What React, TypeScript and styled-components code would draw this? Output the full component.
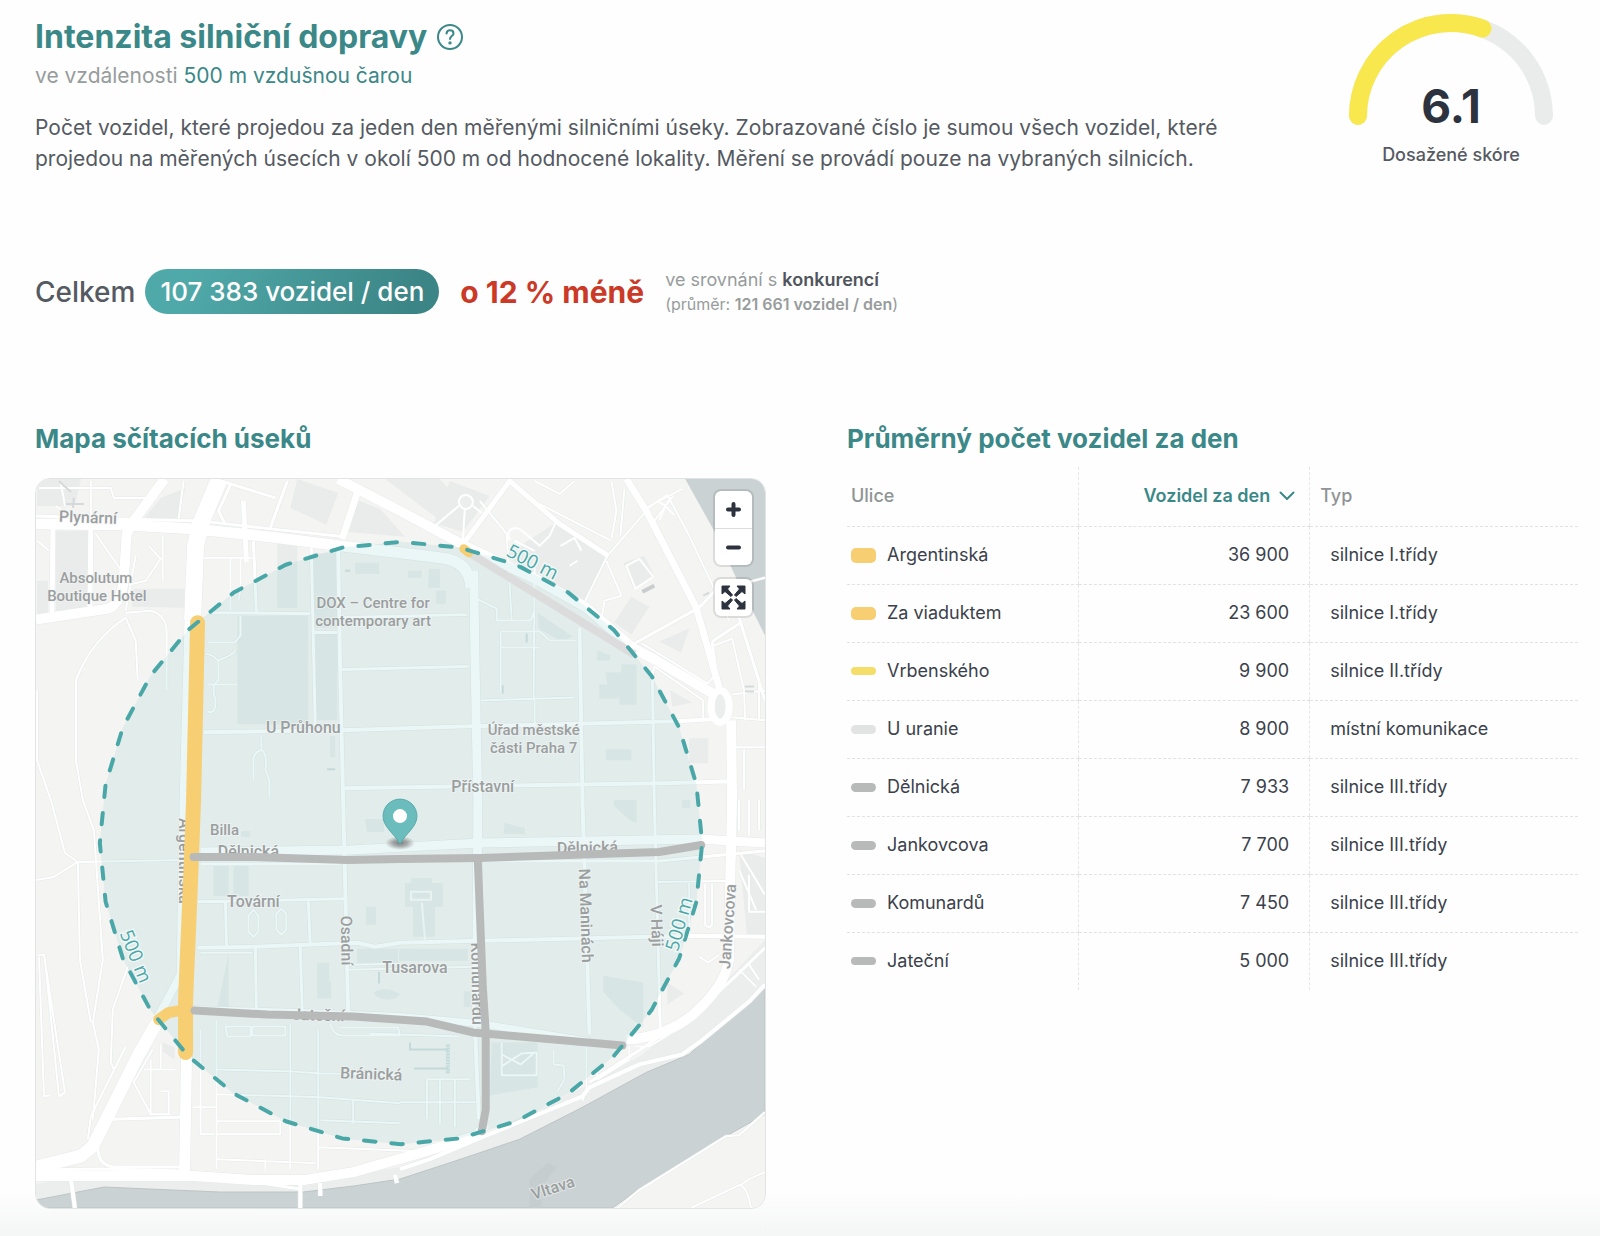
import React from "react";
import styled, { createGlobalStyle } from "styled-components";

const teal = "#3b8888";

const GlobalStyle = createGlobalStyle`
  *, *::before, *::after { box-sizing: border-box; }
  body { margin: 0; background: #fff; }
  button { font: inherit; color: inherit; background: none; border: 0; padding: 0; cursor: pointer; }
  h1, h2, p { margin: 0; }
`;

const Page = styled.main`
  min-height: 100vh;
  padding: 14px 22px 24px 35px;
  font-family: Inter, "Liberation Sans", sans-serif;
  color: #555a62;
  background: linear-gradient(to top, #f4f6f5, #fefefe 44px);
`;

const Header = styled.header`
  display: flex;
  justify-content: space-between;
  gap: 40px;
`;

const Intro = styled.div`
  flex: 1;
  max-width: 1220px;
`;

const TitleRow = styled.div`
  display: flex;
  align-items: center;
  gap: 10px;
  height: 46px;
`;

const Title = styled.h1`
  font-size: 32px;
  line-height: 46px;
  font-weight: 700;
  color: ${teal};
`;

const HelpButton = styled.button`
  display: flex;
  width: 26px;
  height: 26px;
  color: ${teal};
`;

const Subtitle = styled.p`
  font-size: 21px;
  line-height: 31px;
  color: #979c9c;
`;

const Accent = styled.span`
  color: ${teal};
`;

const Description = styled.p`
  margin-top: 21px;
  font-size: 21px;
  line-height: 31px;
`;

const Score = styled.div`
  display: flex;
  flex-direction: column;
  align-items: center;
  width: 254px;
`;

const Gauge = styled.div`
  position: relative;
  width: 204px;
  height: 112px;
`;

const GaugeValue = styled.strong`
  position: absolute;
  inset: auto 0 0;
  text-align: center;
  font-size: 46px;
  line-height: 40px;
  font-weight: 700;
  color: #2c323e;
`;

const ScoreLabel = styled.p`
  margin-top: 16px;
  font-size: 18px;
  line-height: 26px;
  font-weight: 500;
`;

const Summary = styled.section`
  display: flex;
  align-items: center;
  margin-top: 95px;
  height: 45px;
`;

const Total = styled.p`
  font-size: 28px;
  font-weight: 500;
`;

const Pill = styled.span`
  margin-left: 10px;
  padding: 0 15px;
  border-radius: 23px;
  font-size: 26px;
  line-height: 45px;
  font-weight: 500;
  color: #fff;
  background: linear-gradient(110deg, #50a9a9 15%, #3c8586 90%);
`;

const Difference = styled.strong`
  margin-left: 21px;
  font-size: 30px;
  color: #cb3927;
`;

const Comparison = styled.div`
  margin-left: 21px;
  font-size: 18px;
  line-height: 24px;
  color: #979c9c;
`;

const Dark = styled.strong`
  font-weight: 600;
  color: #50555d;
`;

const Small = styled.div`
  font-size: 16px;
  strong { font-weight: 600; }
`;

const Columns = styled.div`
  display: grid;
  grid-template-columns: minmax(0, 1fr) minmax(0, 1fr);
  gap: 81px;
  margin-top: 107px;
`;

const SectionTitle = styled.h2`
  font-size: 26px;
  line-height: 36px;
  font-weight: 700;
  color: ${teal};
`;

const MapFrame = styled.div`
  position: relative;
  margin-top: 21px;
  aspect-ratio: 1;
  overflow: hidden;
  border: 1px solid #e1e4e4;
  border-radius: 15px;
`;

const MapDrawing = styled.svg`
  display: block;
  width: 100%;
  height: 100%;
`;

const Controls = styled.div`
  position: absolute;
  top: 12px;
  right: 13px;
  display: grid;
  gap: 14px;
`;

const ControlGroup = styled.div`
  display: grid;
  border-radius: 6px;
  background: #fff;
  box-shadow: 0 0 0 2px rgba(0, 0, 0, 0.1);
`;

const ControlButton = styled.button`
  display: grid;
  place-items: center;
  width: 37px;
  height: 37px;
  color: #2c323e;
  & + & { border-top: 1px solid #ddd; }
`;

const Table = styled.table`
  width: 100%;
  margin-top: 10px;
  border-collapse: collapse;
  table-layout: fixed;
  font-size: 18px;
  line-height: 26px;
  color: #3b414b;
`;

const HeadCell = styled.th<{ $width: string; $right?: boolean; $inset?: number }>`
  width: ${(p) => p.$width};
  height: 59px;
  padding: 0 14px 0 ${(p) => p.$inset ?? 4}px;
  text-align: ${(p) => (p.$right ? "right" : "left")};
  font-weight: 500;
  color: #8f9495;
  border-bottom: 1px dashed #e2e2e2;
  & + & { border-left: 1px dashed #e6e6e6; }
`;

const SortButton = styled.button`
  display: inline-flex;
  align-items: center;
  gap: 9px;
  color: ${teal};
  font-weight: 600;
`;

const Row = styled.tr`
  &:not(:last-child) td { border-bottom: 1px dashed #e2e2e2; }
`;

const Cell = styled.td<{ $right?: boolean }>`
  height: 58px;
  padding: 0 20px 0 ${(p) => (p.$right ? 4 : 20)}px;
  text-align: ${(p) => (p.$right ? "right" : "left")};
  &:first-child { padding-left: 4px; }
  & + & { border-left: 1px dashed #e6e6e6; }
`;

const Street = styled.div`
  display: flex;
  align-items: center;
  gap: 11px;
`;

const Swatch = styled.span<{ $color: string; $height: number }>`
  width: 25px;
  height: ${(p) => p.$height}px;
  border-radius: 5px;
  background: ${(p) => p.$color};
`;

const rows = [
  { name: "Argentinská", count: "36 900", type: "silnice I.třídy", color: "#f7ce72", size: 15 },
  { name: "Za viaduktem", count: "23 600", type: "silnice I.třídy", color: "#f7ce72", size: 13 },
  { name: "Vrbenského", count: "9 900", type: "silnice II.třídy", color: "#f5de68", size: 8 },
  { name: "U uranie", count: "8 900", type: "místní komunikace", color: "#e2e3e3", size: 9 },
  { name: "Dělnická", count: "7 933", type: "silnice III.třídy", color: "#b8baba", size: 9 },
  { name: "Jankovcova", count: "7 700", type: "silnice III.třídy", color: "#b8baba", size: 9 },
  { name: "Komunardů", count: "7 450", type: "silnice III.třídy", color: "#b8baba", size: 9 },
  { name: "Jateční", count: "5 000", type: "silnice III.třídy", color: "#b8baba", size: 8 },
];

// The 500 m range is a 32-sided ring around the rated address.
const ring =
  Array.from({ length: 32 }, (_, i) => {
    const a = (i * Math.PI) / 16;
    return `${i ? "L" : "M"}${(401 + 302 * Math.sin(a)).toFixed(1)} ${(843 - 302 * Math.cos(a)).toFixed(1)}`;
  }).join("") + "Z";

const blocks = [
  "M55 530H88V611L55 613Z", "M36 580H47V612L36 614Z", "M133 588H184V607L131 606Z",
  "M277 543H297V607H277Z", "M237 615H308V724H237Z", "M313 552H337V627H314Z", "M315 633H337V720H315Z",
  "M36 478H80L74 505H36Z", "M160 497L185 487 176 519H142Z",
  "M297 478L338 492 326 524 290 507Z", "M357 499L380 508 405 536 346 531Z", "M385 478H440L460 500 450 527Z",
  "M450 480L490 495 463 531 434 522Z", "M556 522L610 555 585 605 505 555Z",
  "M632 596L650 606 632 634 615 622Z", "M624 562L645 555 655 575 634 588Z", "M660 641L690 628 682 652Z",
  "M671 690L693 702 673 706Z", "M690 738H709V763H690Z", "M538 612L573 636 562 641 539 628Z",
  "M606 672H622V664H637V704H620V698H600V684H608Z", "M606 749H632V760H607Z", "M598 650L611 655 610 660H598Z",
  "M408 570H422V577H408Z", "M429 568H440V587H428Z", "M436 590H446V603H436Z",
  "M355 562H379V573H355Z", "M213 866H228V896H213Z", "M233 866H248V896H233Z",
  "M405 883H411V878H432V883H443V907H435V937H413V907H405Z", "M357 949H398V963H357Z",
  "M399 949H468V961H399Z", "M365 819H384V832H367Z", "M366 907H376V925H366Z",
  "M317 963H329V982H331V999H317Z", "M330 736H335V757H330Z", "M241 831H249V837H241Z",
  "M604 976L644 983V1028L620 1010 604 992Z", "M492 1043H538V1088L490 1096Z",
  "M614 800H637V823L630 820 615 806Z", "M505 823L525 828V834H504Z", "M228 955L217 1008H228Z",
  "M162 1043L174 1048V1060L162 1052Z", "M374 993Q380 988 390 990L400 994Q398 1000 388 1000 376 1000 374 993Z",
  "M668 983L685 994 668 1005Z", "M740 850L766 858V937H748Z", "M683 800H691V808H683Z", "M464 992H471V1007H464Z",
];

const roads: [number, string][] = [
  [11, "M35 523L120 524 193 528 270 536 340 545 400 552 440 557Q470 560 471 587"],
  [3, "M35 515L120 518 200 520 270 528 345 536"],
  [10, "M164 478L133 520 126 533 123 580Q120 602 108 608L35 619"],
  [17, "M219 478L200 523 195 545 192 620"],
  [8, "M188 620L183 800 180 975 163 1007 150 1030"],
  [13, "M155 1025L137 1057 92 1147 80 1157 35 1168"],
  [11, "M186 1055L184 1172"],
  [10, "M35 1177H193L253 1181 303 1181 353 1173 420 1154 477 1136 486 1125"],
  [3, "M35 1171L100 1170 180 1172 300 1190"],
  [4, "M400 1170L430 1160 480 1139 583 1097 590 1088 640 1065 683 1055 700 1043 750 1002 766 985"],
  [3, "M590 1083L641 1050 700 1010 735 978 766 948"],
  [10, "M732 720L733 800 731 887 730 960Q726 986 695 1014 666 1038 627 1040"],
  [7, "M720 687L697 607 647 510 627 478"],
  [10, "M338 478L400 510 467 546 533 577 587 607 633 647 657 660 713 693"],
  [7, "M357 492L342 538"],
  [5, "M465 541L510 480 560 523 609 555"],
  [5, "M246 561L243 500"],
  [9, "M474 570L475 650 478 800 477 1000"],
  [4, "M474 1000L479 1120"],
  [4, "M203 732L340 730 470 726 677 721 713 719"],
  [3, "M207 612L310 613M314 632H337M342 669L468 666M342 617L467 614"],
  [4, "M338 550L340 668 343 800 348 1013"],
  [3, "M311 547L315 727M253 540L256 612M287 480L270 527"],
  [3, "M221 480L275 497M230 484L218 510 225 524"],
  [4, "M343 788L470 786 665 783 735 781"],
  [4, "M580 627L583 800 590 1035"],
  [3, "M653 670L655 800 661 1033"],
  [9, "M200 852L350 850 480 843 700 839 766 843"],
  [3, "M200 864L340 864M485 861H660L766 851"],
  [3, "M197 902L345 899M225 903L226 947M308 900L310 945"],
  [4, "M197 948L253 947 357 943 375 947 400 943 650 937 693 936 766 937"],
  [2, "M348 970L473 967M348 965L400 964M200 953H252M659 882L726 881M690 883V937"],
  [3, "M255 948L256 1013M300 947L302 1013"],
  [7, "M195 1010L300 1013 400 1017 480 1024 590 1042"],
  [5, "M52 528L51 613M90 527L89 610"],
  [2, "M125 617Q90 640 75 680V760L82 800 93 830 102 960 92 1023 98 1050 92 1120"],
  [2, "M36 690V760L50 800 64 853 77 862 79 960 90 1023M77 862L53 877 35 880M77 862L180 860"],
  [2, "M125 617L135 640 137 680M125 612L150 610Q165 614 166 630V690"],
  [2, "M127 967L112 1010 110 1063 113 1070M125 1047L90 1117 87 1140"],
  [2, "M37 955H43L64 1093 58 1097 44 960M38 957L43 1097 49 1096"],
  [3, "M110 1120L180 1118M97 1148Q97 1167 115 1168H180"],
  [2, "M152 1050L133 1083 150 1115H170M150 1060V1115M160 1045V1070H175M143 1070H175M160 1092H168V1115"],
  [2, "M216 1020V1170M200 1030V1135H214M192 1108H216M216 1095L290 1097 320 1098 400 1104M216 1122H280V1135H216"],
  [2, "M216 1070L290 1072 318 1074 400 1076M290 1025V1170M318 1030V1170M353 1100V1124M216 1160L315 1164M265 1160V1172M318 1148L420 1152"],
  [2, "M320 1121L400 1124M427 1080H470M427 1080V1120M440 1080V1125M455 1080V1128M400 1103H476"],
  [2, "M205 653Q214 655 217 660 232 655 235 650M218 660V680Q210 684 215 700 215 715 207 711M207 684H237M207 642H234L240 635V615"],
  [2, "M261 735V750Q253 752 253 760V780M262 750Q267 755 265 770L269 780V797"],
  [2, "M248 916L253 910 258 916V932L253 937 248 932ZM276 914L281 909 286 914V930L281 935 276 930Z"],
  [2, "M501 631H540L550 640H577M501 631V693M502 647H540M535 560L534 700M481 700L575 697M535 700V723M475 597L497 608V620H531L535 610"],
  [2, "M480 500L507 533 512 620M540 503L612 540M612 480L617 510 612 538M625 488L621 535M575 480L560 493 535 480"],
  [2, "M647 510L608 555 584 604M607 560L622 595 605 600 602 620M668 494L690 535 716 590 730 620M647 507L683 488M674 495L655 520M716 590L766 577"],
  [3, "M635 643L700 607 716 590M713 641L742 622M713 641L718 680M740 617L766 700"],
  [2, "M715 645L733 638 745 690 746 720M742 622L760 680V720M733 717L766 720M733 747H766M745 750V790M733 694L766 690"],
  [2, "M643 643L708 683 717 674M704 720V700L655 666M655 666L652 680"],
  [2, "M740 800V830M750 800V835M760 800V830M742 855L760 885M745 860L766 895M740 870L757 910M750 875V912H766"],
  [2, "M706 884V925Q709 930 713 925V884M700 957L709 963 720 955M740 970L757 987M750 965L760 980"],
  [2, "M502 1043V1076H537V1053L522 1054 502 1067M502 1055L521 1065 535 1053M554 1050V1065L564 1066 565 1080 558 1092"],
  [2, "M597 1070L598 1080 630 1060V1046M635 1047H650L670 1035M587 1042V1090L583 1101"],
  [2, "M225 1027H250V1037H227ZM252 1027H285V1036H252ZM330 1024Q333 1037 345 1036H400L398 1028H340M370 1034L460 1037"],
  [2, "M38 487H110L113 497H145M60 482L64 505M90 480V520M55 505L75 520M36 540L48 550M95 533L122 572M148 545L160 558 145 580 128 584M162 535V580"],
  [2, "M203 557H252M230 557V610M240 557V590L238 600M135 555L125 610M183 480L178 518"],
  [2, "M618 1209L640 1191 727 1137 740 1136 766 1113M692 1209L740 1186Q748 1187 752 1209M742 1186L750 1180 766 1173"],
  [4, "M300 1182V1209M320 1184V1197M70 1180L74 1209M395 1176L397 1184"],
];

type Label = [text: string, x: number, y: number, turn?: number];

const places: Label[] = [
  ["Absolutum", 95, 582], ["Boutique Hotel", 96, 600],
  ["DOX – Centre for", 373, 607], ["contemporary art", 373, 625],
  ["Úřad městské", 534, 735], ["části Praha 7", 534, 753],
  ["Billa", 224, 835],
];

const streets: Label[] = [
  ["Plynární", 87, 522, 2], ["U Průhonu", 303, 733], ["Přístavní", 483, 792],
  ["Dělnická", 248, 857], ["Dělnická", 588, 853, -1],
  ["Tovární", 253, 907], ["Tusarova", 415, 973], ["Jateční", 318, 1021, 2], ["Bránická", 371, 1080, 2],
  ["Argentinská", 178, 861, 90], ["Osadní", 341, 941, 89], ["Komunardů", 472, 984, 89],
  ["Na Maninách", 581, 916, 88], ["V Háji", 652, 926, 88], ["Jankovcova", 734, 927, -86],
  ["Vltava", 555, 1194, -18],
];

const rangeLabels: [number, number, number][] = [[530, 567, 27], [129, 959, 68], [686, 926, -74]];

function Labels({ items, size }: { items: Label[]; size: number }) {
  return (
    <g fontSize={size}>
      {items.map(([text, x, y, turn = 0]) => (
        <text key={`${text}${x}`} transform={`translate(${x} ${y}) rotate(${turn})`}>{text}</text>
      ))}
    </g>
  );
}

function StreetMap() {
  return (
    <MapDrawing viewBox="35 478 731 731" role="img" aria-label="Mapa sčítacích úseků">
      <rect x="35" y="478" width="731" height="731" fill="#f4f4f3" />
      <path d="M35 1185L100 1174 200 1180 310 1183 400 1168 480 1138 590 1085 640 1057 700 1010 766 940V1000L640 1090 400 1190 35 1205Z" fill="#ebeeed" />
      <path d="M686 478L715 530 737 577 766 635V478Z" fill="#cad2d4" />
      <path d="M35 1201L103 1188 220 1193 303 1193 353 1187 400 1180 467 1158 520 1140 583 1108 647 1073 690 1055 740 1010 766 985V1115L727 1137 637 1192 613 1209H35Z" fill="#cad2d4" stroke="#bcc4c5" />
      <path d="M530 1180L548 1164 557 1168 540 1190 542 1209H530Z" fill="#c5cdcf" />
      {blocks.map((d) => <path key={d} d={d} fill="#e9eceb" />)}
      <g fill="none" strokeLinejoin="round">
        {roads.map(([w, d]) => <path key={`edge${d}`} d={d} stroke="#e6eae9" strokeWidth={w + 1} />)}
        {roads.map(([w, d]) => <path key={d} d={d} stroke="#fff" strokeWidth={w} />)}
        <ellipse cx="721" cy="706" rx="9" ry="16" fill="#ebeeed" stroke="#fff" strokeWidth="7" />
        <circle cx="466" cy="501" r="7" fill="#ebeeed" stroke="#fff" strokeWidth="2" />
        <path d="M459 505L435 525M465 508L463 540M473 505L482 512M510 540Q505 525 520 528L540 545 550 535 556 522M515 540L535 550" stroke="#fff" strokeWidth="2" />
        <path d="M647 508L668 494M658 500L666 505 672 497M666 505L660 519M666 505L675 514" stroke="#fff" strokeWidth="2" />
        <path d="M627 565L640 558 654 576 636 588ZM561 545L575 537 582 550M570 565L578 560" stroke="#fff" strokeWidth="2" />
        <path d="M643 591L655 585" stroke="#c9cdcd" strokeWidth="4" />
        <path d="M746 686H755M746 691H755M704 595L710 592M65 503H83M73 497L72 507M58 480L70 491" stroke="#d6d9d9" strokeWidth="2" />
      </g>
      <path d={ring} fill="#4aabab" fillOpacity="0.11" />
      <g fill="none" stroke="#c4d9da" strokeWidth="2">
        <path d="M410 1043V1050H448M414 1069H448M379 972V984M527 633V642M503 685V693M327 769H335M345 570H350" />
        <path d="M448 1045V1075" strokeWidth="4" strokeDasharray="2 1" />
        <path d="M411 892H431V900H411ZM422 903L425 940" stroke="#e8f3f2" />
      </g>
      <g fill="#9b9e9f" fontFamily="Roboto, sans-serif" fontWeight="500" textAnchor="middle" stroke="#f3f6f5" strokeOpacity="0.6" strokeWidth="2" paintOrder="stroke">
        <Labels items={places} size={15} />
        <Labels items={streets} size={16} />
      </g>
      <g fill="none" strokeLinecap="round" strokeLinejoin="round">
        <path d="M468 551L635 654" stroke="#dcdcdd" strokeWidth="8" strokeLinecap="butt" />
        <path d="M464 548L469 552" stroke="#f7ce72" strokeWidth="9" />
        <path d="M197 622L193 800 190 880 185 1000V1053" stroke="#f7ce72" strokeWidth="15" />
        <path d="M185 1010L168 1013 158 1020" stroke="#f7ce72" strokeWidth="11" />
        <g stroke="#b8b9b9" strokeWidth="8">
          <path d="M193 857H253L347 860 400 859 480 858 660 852 702 845" />
          <path d="M478 860L483 987 486 1033V1110L482 1132" />
          <path d="M194 1011L267 1015 353 1017 427 1022 473 1033 623 1046" />
        </g>
        <path d={ring} stroke="#4aa7a7" strokeWidth="4" pathLength="1888" strokeDasharray="11.5 15.86" strokeDashoffset="-12" />
      </g>
      <g fill="#4aa7a7" fontFamily="Open Sans, sans-serif" fontSize="19" textAnchor="middle" stroke="#f1f7f6" strokeWidth="3" paintOrder="stroke">
        {rangeLabels.map(([x, y, turn]) => (
          <text key={x} transform={`translate(${x} ${y}) rotate(${turn})`}>500 m</text>
        ))}
      </g>
      <defs>
        <radialGradient id="pinShadow">
          <stop offset="0" stopColor="#555" stopOpacity="0.75" />
          <stop offset="0.5" stopColor="#666" stopOpacity="0.5" />
          <stop offset="1" stopColor="#777" stopOpacity="0" />
        </radialGradient>
      </defs>
      <ellipse cx="400" cy="843" rx="15" ry="7" fill="url(#pinShadow)" />
      <path d="M400 844C394 833 383 827 383 816A17 17 0 0 1 417 816C417 827 406 833 400 844Z" fill="#6abcbd" stroke="#58abab" />
      <circle cx="400" cy="816" r="7" fill="#fff" />
    </MapDrawing>
  );
}

export default function App() {
  return (
    <>
      <GlobalStyle />
      <Page>
        <Header>
          <Intro>
            <TitleRow>
              <Title>Intenzita silniční dopravy</Title>
              <HelpButton aria-label="Nápověda">
                <svg width="26" height="26" viewBox="0 0 26 26" fill="none" stroke="currentColor" strokeWidth="2" strokeLinecap="round">
                  <circle cx="13" cy="13" r="12" />
                  <path d="M9.5 9.5C9.8 7.2 11.2 6.3 13 6.3 15 6.3 16.5 7.6 16.5 9.5 16.5 12 13 12.2 13 15" />
                  <circle cx="13" cy="18.9" r="0.7" fill="currentColor" />
                </svg>
              </HelpButton>
            </TitleRow>
            <Subtitle>ve vzdálenosti <Accent>500 m vzdušnou čarou</Accent></Subtitle>
            <Description>
              Počet vozidel, které projedou za jeden den měřenými silničními úseky. Zobrazované číslo je sumou všech vozidel, které projedou na měřených úsecích v okolí 500 m od hodnocené lokality. Měření se provádí pouze na vybraných silnicích.
            </Description>
          </Intro>
          <Score>
            <Gauge>
              <svg width="204" height="112" viewBox="0 0 204 112" fill="none" strokeWidth="18" strokeLinecap="round">
                <path d="M9 102A93 93 0 0 1 195 102" stroke="#eaeceb" />
                <path d="M9 102A93 93 0 0 1 133.5 14.5" stroke="#f8e84d" />
              </svg>
              <GaugeValue>6.1</GaugeValue>
            </Gauge>
            <ScoreLabel>Dosažené skóre</ScoreLabel>
          </Score>
        </Header>

        <Summary>
          <Total>Celkem</Total>
          <Pill>107 383 vozidel / den</Pill>
          <Difference>o 12 % méně</Difference>
          <Comparison>
            ve srovnání s <Dark>konkurencí</Dark>
            <Small>(průměr: <strong>121 661 vozidel / den</strong>)</Small>
          </Comparison>
        </Summary>

        <Columns>
          <section>
            <SectionTitle>Mapa sčítacích úseků</SectionTitle>
            <MapFrame>
              <StreetMap />
              <Controls>
                <ControlGroup>
                  <ControlButton aria-label="Přiblížit">
                    <svg width="15" height="15" viewBox="0 0 15 15" stroke="currentColor" strokeWidth="4" strokeLinecap="round"><path d="M2 7.5H13M7.5 2V13" /></svg>
                  </ControlButton>
                  <ControlButton aria-label="Oddálit">
                    <svg width="15" height="15" viewBox="0 0 15 15" stroke="currentColor" strokeWidth="4" strokeLinecap="round"><path d="M2 7.5H13" /></svg>
                  </ControlButton>
                </ControlGroup>
                <ControlGroup>
                  <ControlButton aria-label="Celá obrazovka">
                    <svg width="25" height="25" viewBox="0 0 25 25" fill="currentColor" stroke="currentColor" strokeWidth="1" strokeLinejoin="round">
                      <path d="M1 1H9L6.5 4 11.5 10 10 11.5 4 6.5 1 9ZM24 1H16L18.5 4 13.5 10 15 11.5 21 6.5 24 9ZM1 24H9L6.5 21 11.5 15 10 13.5 4 18.5 1 16ZM24 24H16L18.5 21 13.5 15 15 13.5 21 18.5 24 16Z" />
                    </svg>
                  </ControlButton>
                </ControlGroup>
              </Controls>
            </MapFrame>
          </section>

          <section>
            <SectionTitle>Průměrný počet vozidel za den</SectionTitle>
            <Table>
              <thead>
                <tr>
                  <HeadCell scope="col" $width="31.7%">Ulice</HeadCell>
                  <HeadCell scope="col" $width="31.6%" $right aria-sort="descending">
                    <SortButton>
                      Vozidel za den
                      <svg width="16" height="10" viewBox="0 0 16 10" fill="none" stroke="currentColor" strokeWidth="2" strokeLinecap="round" strokeLinejoin="round"><path d="M1.5 1.5L8 8 14.5 1.5" /></svg>
                    </SortButton>
                  </HeadCell>
                  <HeadCell scope="col" $width="36.7%" $inset={10}>Typ</HeadCell>
                </tr>
              </thead>
              <tbody>
                {rows.map((r) => (
                  <Row key={r.name}>
                    <Cell><Street><Swatch $color={r.color} $height={r.size} />{r.name}</Street></Cell>
                    <Cell $right>{r.count}</Cell>
                    <Cell>{r.type}</Cell>
                  </Row>
                ))}
              </tbody>
            </Table>
          </section>
        </Columns>
      </Page>
    </>
  );
}
